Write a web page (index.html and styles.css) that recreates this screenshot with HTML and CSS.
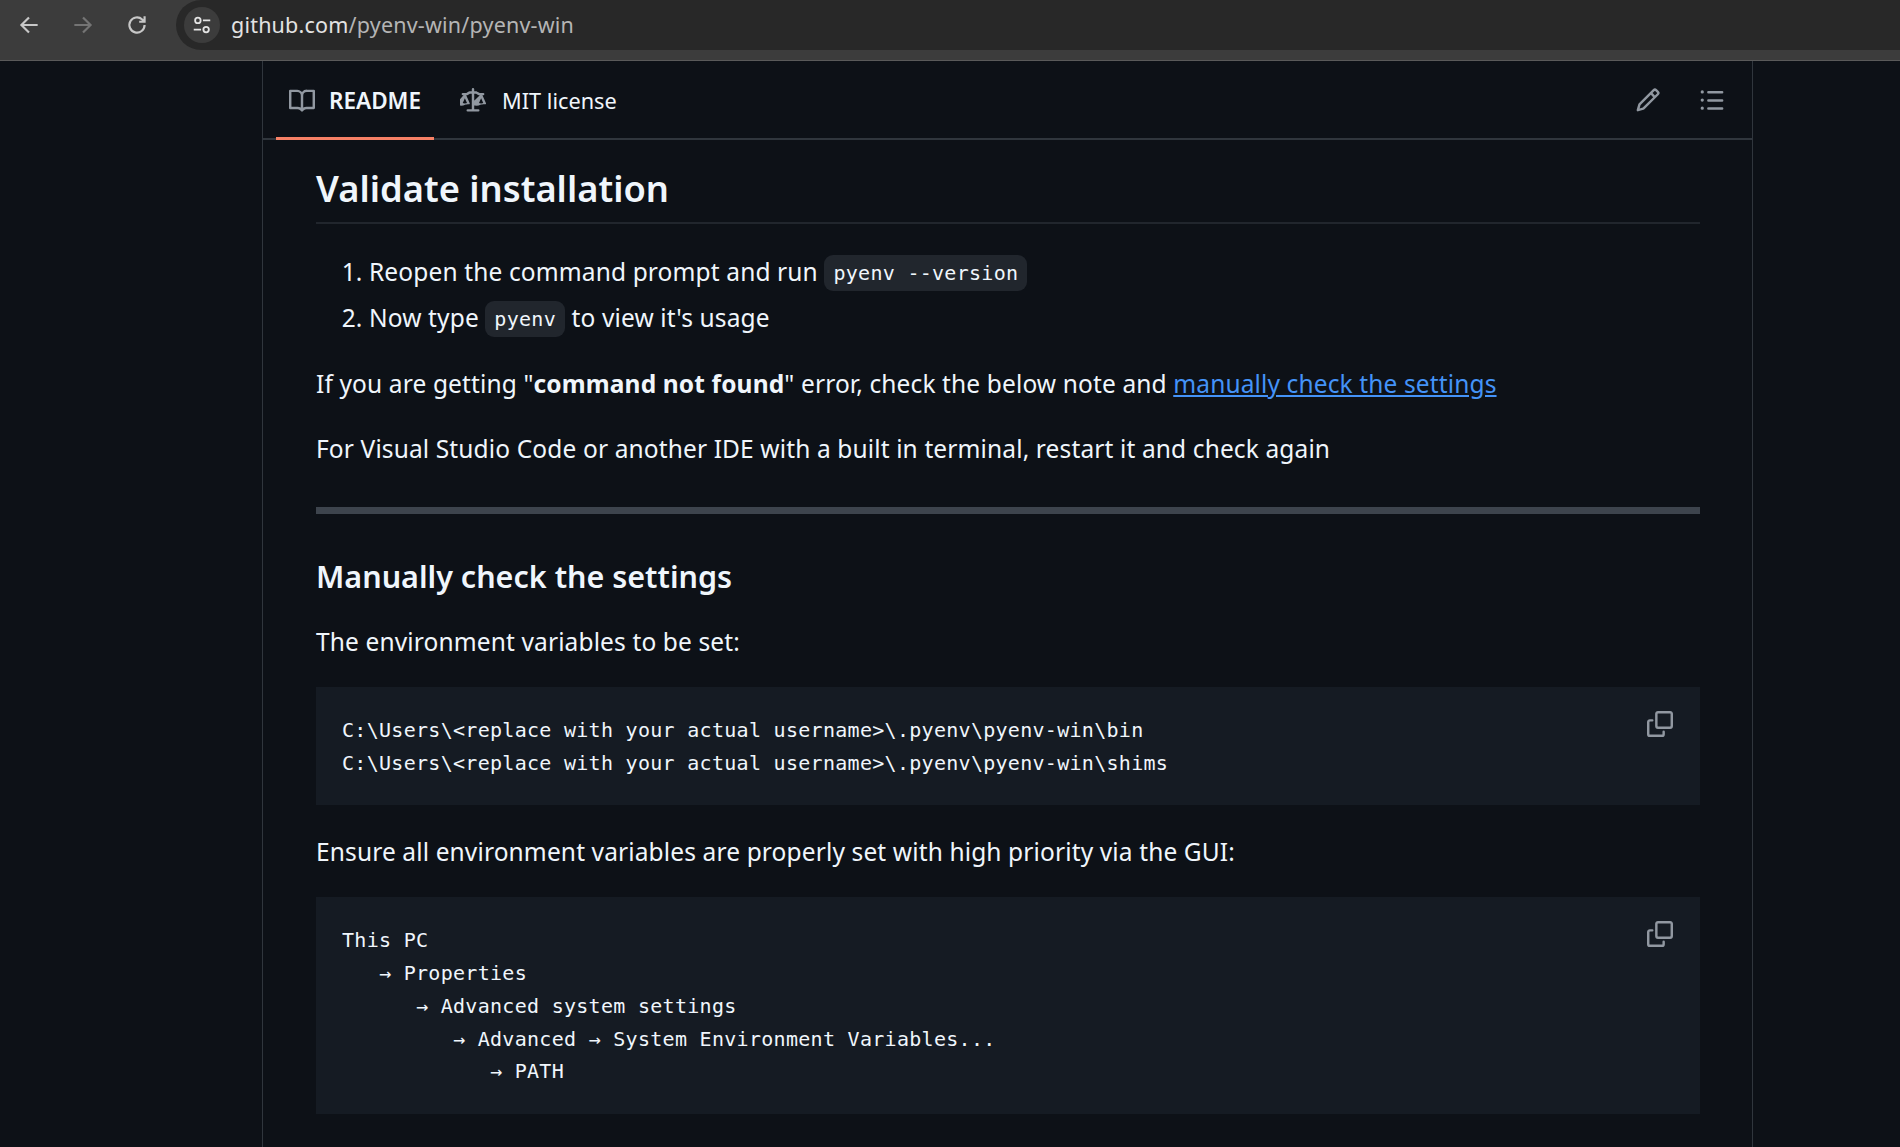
FILE: index.html
```html
<!DOCTYPE html>
<html lang="en">
<head>
<meta charset="utf-8">
<title>pyenv-win</title>
<link rel="stylesheet" href="styles.css">
</head>
<body>
<header class="chrome">
  <div class="chrome-main">
    <div class="nav">
      <svg class="nav-icon" viewBox="0 0 24 24"><path d="M20 12H5M12 5l-7 7 7 7"/></svg>
      <svg class="nav-icon dim" viewBox="0 0 24 24"><path d="M4 12h15M12 5l7 7-7 7"/></svg>
      <svg class="nav-icon" viewBox="0 0 24 24"><path d="M19 12a7 7 0 1 1-2.2-5.1L19 9M19 4v5h-5"/></svg>
    </div>
    <div class="omnibox">
      <span class="site-btn">
        <svg class="tune" viewBox="0 0 24 24"><circle cx="7.500" cy="7" r="3"/><path d="M13 7h8M3 17h8"/><circle cx="16.500" cy="17" r="3"/></svg>
      </span>
      <span class="url">github.com<span class="url-path">/pyenv-win/pyenv-win</span></span>
    </div>
  </div>
  <div class="chrome-strip"></div>
</header>

<main class="readme">
  <nav class="tabs">
    <a class="tab active">
      <svg class="tab-icon" viewBox="0 0 16 16"><path d="M0 1.750A.75.75 0 0 1 .75 1h4.253c1.227 0 2.317.590 3 1.501A3.743 3.743 0 0 1 11.006 1h4.245a.75.75 0 0 1 .75.75v10.500a.75.75 0 0 1-.75.75h-4.507a2.250 2.250 0 0 0-1.591.659l-.622.621a.75.75 0 0 1-1.060 0l-.622-.621A2.250 2.250 0 0 0 5.258 13H.75a.75.75 0 0 1-.75-.75Zm7.251 10.324.004-5.073-.002-2.253A2.250 2.250 0 0 0 5.003 2.500H1.500v9h3.757a3.750 3.750 0 0 1 1.994.574ZM8.755 4.750l-.004 7.322a3.752 3.752 0 0 1 1.992-.572H14.500v-9h-3.495a2.250 2.250 0 0 0-2.250 2.250Z"/></svg>
      <span>README</span>
    </a>
    <a class="tab">
      <svg class="tab-icon" viewBox="0 0 16 16"><path d="M8.750.750V2h.985c.304 0 .603.080.867.231l1.290.736c.038.022.080.033.124.033h2.234a.75.75 0 0 1 0 1.500h-.427l2.111 4.692a.75.75 0 0 1-.154.838l-.530-.530.529.531-.1.002-.2.002-.6.006-.6.005-.1.01-.45.040c-.21.017-.50.040-.86.064a5.010 5.010 0 0 1-.279.160 5.010 5.010 0 0 1-2.340.590 5.010 5.010 0 0 1-2.340-.590 5.010 5.010 0 0 1-.280-.160 3.810 3.810 0 0 1-.085-.064l-.045-.040-.01-.01-.006-.005-.006-.006-.002-.002-.002-.002a.75.75 0 0 1-.154-.838L12.178 4.500h-.162c-.305 0-.604-.079-.868-.231l-1.290-.736a.245.245 0 0 0-.124-.033H8.750V13h2.500a.75.75 0 0 1 0 1.500h-6.500a.75.75 0 0 1 0-1.500h2.500V3.500h-.984a.245.245 0 0 0-.124.033l-1.289.737c-.265.150-.564.230-.869.230h-.162l2.112 4.692a.75.75 0 0 1-.154.838l-.530-.530.529.531-.1.002-.2.002-.6.006-.16.015-.45.040c-.21.017-.50.040-.86.064a5.010 5.010 0 0 1-.279.160 5.010 5.010 0 0 1-2.340.590 5.010 5.010 0 0 1-2.340-.590 5.010 5.010 0 0 1-.280-.160 3.810 3.810 0 0 1-.085-.064l-.045-.040-.016-.015-.006-.006-.002-.002-.002-.002a.75.75 0 0 1-.154-.838L2.178 4.500H1.750a.75.75 0 0 1 0-1.500h2.234a.249.249 0 0 0 .125-.033l1.288-.737c.265-.150.564-.230.869-.230h.984V.750a.75.75 0 0 1 1.500 0Zm2.945 8.477c.285.135.718.273 1.305.273s1.020-.138 1.305-.273L13 6.327Zm-10 0c.285.135.718.273 1.305.273s1.020-.138 1.305-.273L3 6.327Z"/></svg>
      <span>MIT license</span>
    </a>
    <div class="tab-actions">
      <svg class="tab-icon" viewBox="0 0 16 16"><path d="m11.013 1.427a1.750 1.750 0 0 1 2.474 0l1.086 1.086a1.750 1.750 0 0 1 0 2.474l-8.610 8.610c-.21.210-.470.364-.756.445l-3.251.930a.75.75 0 0 1-.927-.928l.929-3.250c.081-.286.235-.547.445-.758l8.610-8.610Zm.176 4.823L9.750 4.810l-6.286 6.287a.253.253 0 0 0-.064.108l-.558 1.953 1.953-.558a.253.253 0 0 0 .108-.064Zm1.238-3.763a.25.25 0 0 0-.354 0L10.811 3.750l1.439 1.440 1.263-1.263a.25.25 0 0 0 0-.354Z"/></svg>
      <svg class="tab-icon" viewBox="0 0 16 16"><path d="M5.750 2.500h8.500a.75.75 0 0 1 0 1.500h-8.500a.75.75 0 0 1 0-1.500Zm0 5h8.500a.75.75 0 0 1 0 1.500h-8.500a.75.75 0 0 1 0-1.500Zm0 5h8.500a.75.75 0 0 1 0 1.500h-8.500a.75.75 0 0 1 0-1.500ZM2 14a1 1 0 1 1 0-2 1 1 0 0 1 0 2Zm1-6a1 1 0 1 1-2 0 1 1 0 0 1 2 0ZM2 4a1 1 0 1 1 0-2 1 1 0 0 1 0 2Z"/></svg>
    </div>
  </nav>

  <article class="body">
    <h2 class="h-validate">Validate installation</h2>
    <ol class="steps">
      <li>Reopen the command prompt and run <code>pyenv --version</code></li>
      <li>Now type <code>pyenv</code> to view it's usage</li>
    </ol>
    <p>If you are getting "<strong>command not found</strong>" error, check the below note and <a class="link">manually check the settings</a></p>
    <p>For Visual Studio Code or another IDE with a built in terminal, restart it and check again</p>
    <hr class="rule">
    <h3 class="h-settings">Manually check the settings</h3>
    <p>The environment variables to be set:</p>
    <div class="codeblock">
<pre>C:\Users\&lt;replace with your actual username&gt;\.pyenv\pyenv-win\bin
C:\Users\&lt;replace with your actual username&gt;\.pyenv\pyenv-win\shims</pre>
      <svg class="copy" viewBox="0 0 16 16"><path d="M0 6.750C0 5.784.784 5 1.750 5h1.500a.75.75 0 0 1 0 1.500h-1.500a.25.25 0 0 0-.25.25v7.500c0 .138.112.25.25.25h7.500a.25.25 0 0 0 .25-.25v-1.500a.75.75 0 0 1 1.500 0v1.500A1.750 1.750 0 0 1 9.250 16h-7.500A1.750 1.750 0 0 1 0 14.250Z"/><path d="M5 1.750C5 .784 5.784 0 6.750 0h7.500C15.216 0 16 .784 16 1.750v7.500A1.750 1.750 0 0 1 14.250 11h-7.500A1.750 1.750 0 0 1 5 9.250Zm1.750-.25a.25.25 0 0 0-.25.25v7.500c0 .138.112.25.25.25h7.500a.25.25 0 0 0 .25-.25v-7.500a.25.25 0 0 0-.25-.25Z"/></svg>
    </div>
    <p>Ensure all environment variables are properly set with high priority via the GUI:</p>
    <div class="codeblock">
<pre>This PC
   → Properties
      → Advanced system settings
         → Advanced → System Environment Variables...
            → PATH</pre>
      <svg class="copy" viewBox="0 0 16 16"><path d="M0 6.750C0 5.784.784 5 1.750 5h1.500a.75.75 0 0 1 0 1.500h-1.500a.25.25 0 0 0-.25.25v7.500c0 .138.112.25.25.25h7.500a.25.25 0 0 0 .25-.25v-1.500a.75.75 0 0 1 1.500 0v1.500A1.750 1.750 0 0 1 9.250 16h-7.500A1.750 1.750 0 0 1 0 14.250Z"/><path d="M5 1.750C5 .784 5.784 0 6.750 0h7.500C15.216 0 16 .784 16 1.750v7.500A1.750 1.750 0 0 1 14.250 11h-7.500A1.750 1.750 0 0 1 5 9.250Zm1.750-.25a.25.25 0 0 0-.25.25v7.500c0 .138.112.25.25.25h7.500a.25.25 0 0 0 .25-.25v-7.500a.25.25 0 0 0-.25-.25Z"/></svg>
    </div>
  </article>
</main>
</body>
</html>
```
FILE: styles.css
```css
* { box-sizing: border-box; }
html, body { margin: 0; padding: 0; height: 100%; overflow: hidden; background: #0d1117; }
body { font-family: "Noto Sans", "Open Sans", sans-serif; color: #f0f6fc; }

.chrome { height: 61px; background: #3c3c3c; border-bottom: 1px solid #5a5a5a; }
.chrome-main { display: flex; height: 50px; }
.chrome-strip { height: 10px; }
.nav { display: flex; flex: none; align-items: center; gap: 28px; width: 176px; height: 50px; padding-left: 16px; }
.nav-icon { flex: none; width: 26px; height: 26px; fill: none; stroke: #c7c7c7; stroke-width: 2; }
.nav-icon.dim { stroke: #747474; }
.omnibox { flex: 1; display: flex; align-items: center; background: #282828; border-radius: 25px 0 0 25px; padding-left: 8px; }
.site-btn { display: flex; flex: none; align-items: center; justify-content: center; width: 36px; height: 36px; border-radius: 50%; background: #3c3c3c; margin-right: 11px; }
.tune { width: 22px; height: 22px; fill: none; stroke: #e3e3e3; stroke-width: 2; }
.url { font-size: 21.500px; letter-spacing: 0.200px; color: #e3e3e3; white-space: nowrap; padding-bottom: 2px; }
.url-path { color: #b5b5b5; }

.readme { width: 1491px; height: 1086px; margin-left: 262px; border-left: 1px solid #30363d; border-right: 1px solid #30363d; }
.tabs { display: flex; align-items: stretch; height: 79px; padding-left: 13px; padding-right: 27px; border-bottom: 2px solid #30363d; }
.tab { display: flex; align-items: center; gap: 14px; height: 79px; padding: 0 13px; font-size: 21.700px; color: #f0f6fc; border-top: 3px solid transparent; border-bottom: 3px solid transparent; }
.tab + .tab { margin-left: 13px; gap: 16px; }
.tab.active { font-size: 22.500px; font-weight: 600; border-bottom-color: #f78166; }
.tab-icon { flex: none; width: 26px; height: 26px; fill: #9198a1; }
.tab-actions { margin-left: auto; display: flex; align-items: center; gap: 38px; }

.body { padding: 0 52px 0 53px; font-size: 24.500px; letter-spacing: 0.130px; line-height: 40px; }
h2, h3 { margin: 0; font-weight: 600; letter-spacing: 0; }
.h-validate { font-size: 36.300px; line-height: 45px; margin-top: 26px; padding-bottom: 11px; border-bottom: 2px solid #21262d; }
.steps { margin: 28px 0 26px; padding-left: 53px; }
.steps li { height: 40px; margin-bottom: 6px; }
p { margin: 0 0 25px; }
code { font-family: "DejaVu Sans Mono", monospace; font-size: 20px; letter-spacing: 0.290px; background: #21262d; border-radius: 9px; padding: 6px 9px; vertical-align: 1px; }
.link { color: #4493f8; text-decoration: underline; }
.rule { height: 7px; margin: 38px 0 43px; border: 0; background: #3d444d; }
.h-settings { font-size: 30.500px; line-height: 38px; margin-bottom: 27px; }
.codeblock { position: relative; background: #151b23; padding: 27px 26px 26px; margin-bottom: 27px; }
pre { margin: 0; font-family: "DejaVu Sans Mono", monospace; font-size: 20px; letter-spacing: 0.290px; line-height: 32.700px; color: #f0f6fc; }
.copy { position: absolute; top: 24px; right: 27px; width: 26px; height: 26px; fill: #9198a1; }
```
